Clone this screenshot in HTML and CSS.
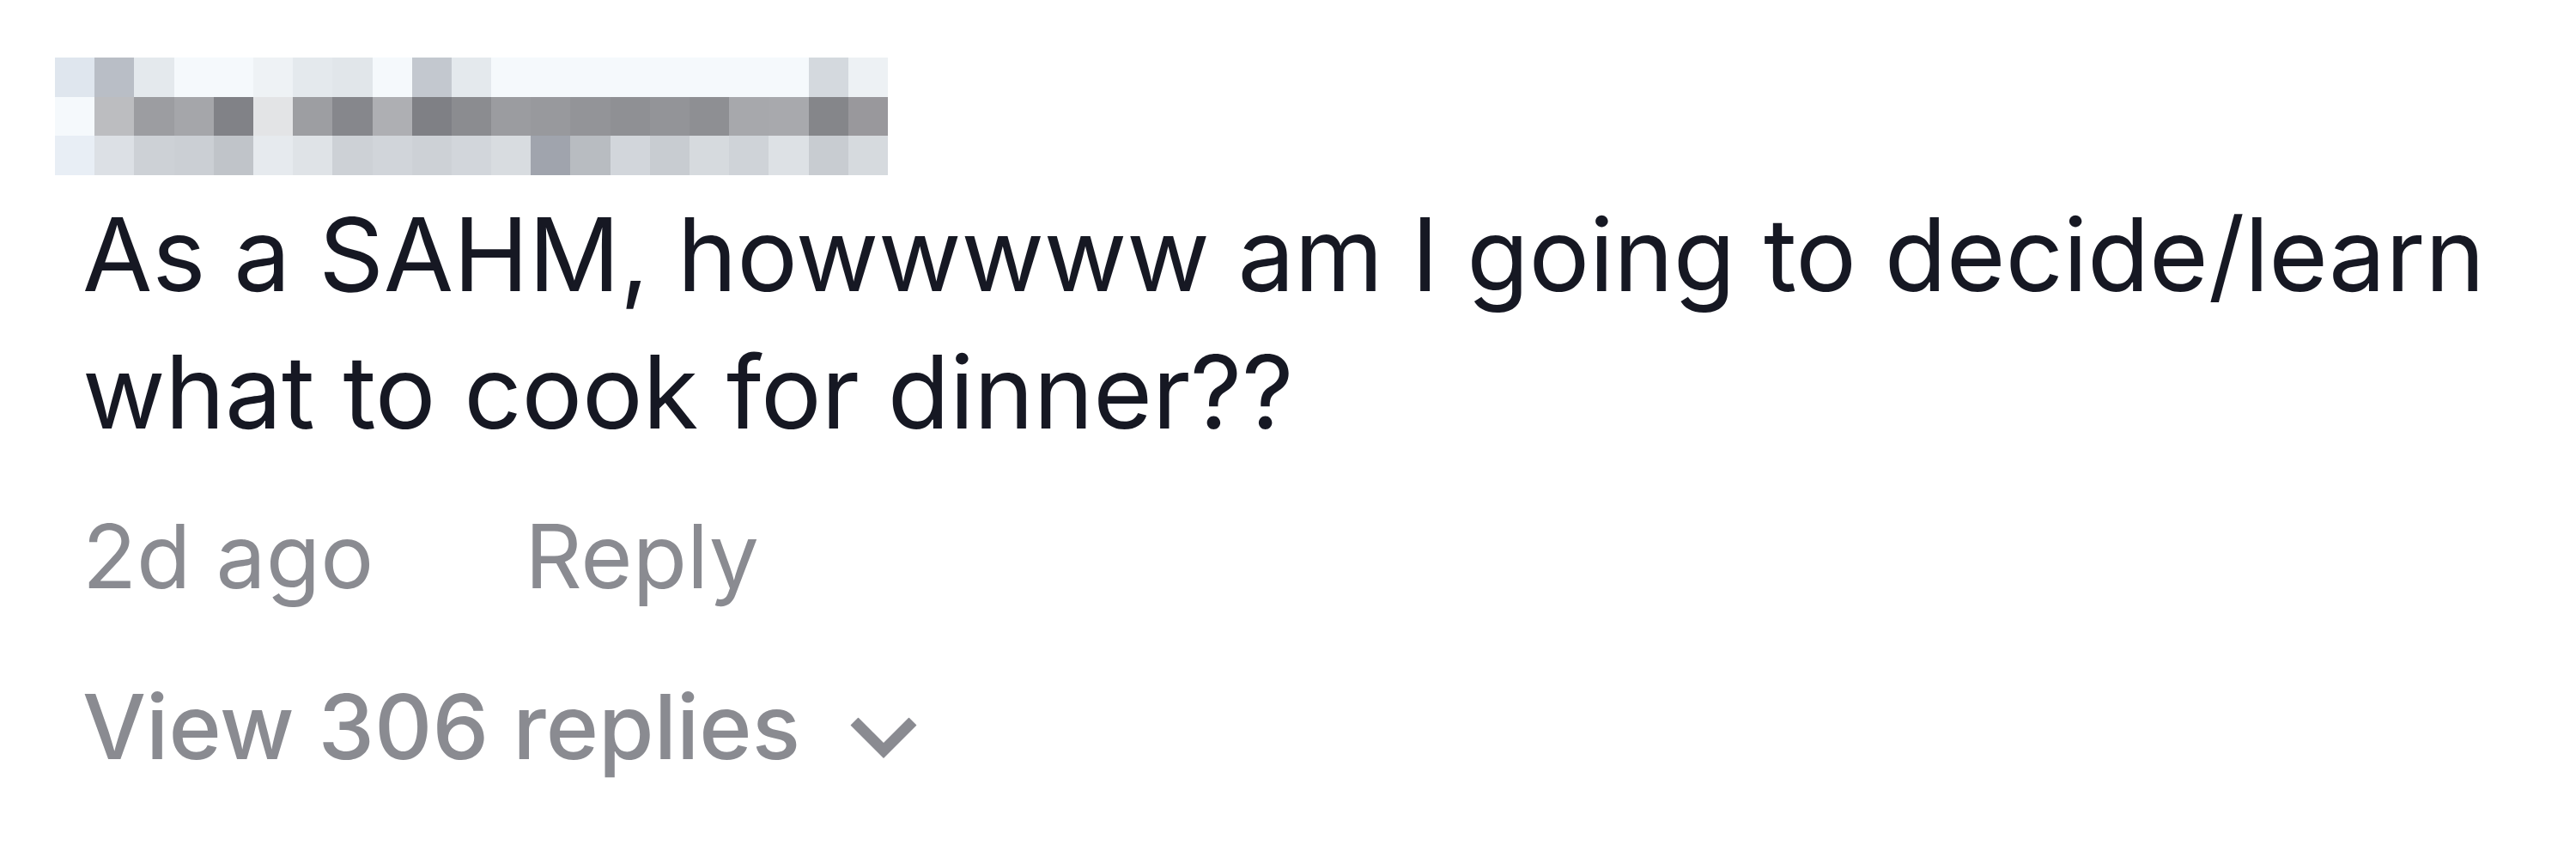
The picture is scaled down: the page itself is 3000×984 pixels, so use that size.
FILE: index.html
```html
<!DOCTYPE html>
<html lang="en">
<head>
<meta charset="utf-8">
<title>Comment</title>
<link rel="stylesheet" href="styles.css">
</head>
<body>
<div class="comment">
  <svg class="name-mosaic" viewBox="0 0 21 3" preserveAspectRatio="none" shape-rendering="crispEdges" aria-label="username (blurred)">
    <g>
      <rect x="0" y="0" width="1" height="1" fill="#dfe6ee"/><rect x="1" y="0" width="1" height="1" fill="#b9bec6"/><rect x="2" y="0" width="1" height="1" fill="#e4e9ed"/><rect x="3" y="0" width="1" height="1" fill="#f5f9fc"/><rect x="4" y="0" width="1" height="1" fill="#f5f9fc"/><rect x="5" y="0" width="1" height="1" fill="#eef2f5"/><rect x="6" y="0" width="1" height="1" fill="#e4e9ed"/><rect x="7" y="0" width="1" height="1" fill="#e1e6ea"/><rect x="8" y="0" width="1" height="1" fill="#f5f9fc"/><rect x="9" y="0" width="1" height="1" fill="#c3c8cf"/><rect x="10" y="0" width="1" height="1" fill="#e4e9ed"/><rect x="11" y="0" width="8" height="1" fill="#f5f9fc"/><rect x="19" y="0" width="1" height="1" fill="#d4d9de"/><rect x="20" y="0" width="1" height="1" fill="#edf1f4"/>
      <rect x="0" y="1" width="1" height="1" fill="#f5f9fc"/><rect x="1" y="1" width="1" height="1" fill="#bcbdc0"/><rect x="2" y="1" width="1" height="1" fill="#9c9da1"/><rect x="3" y="1" width="1" height="1" fill="#a5a6aa"/><rect x="4" y="1" width="1" height="1" fill="#818287"/><rect x="5" y="1" width="1" height="1" fill="#e3e4e6"/><rect x="6" y="1" width="1" height="1" fill="#9d9ea2"/><rect x="7" y="1" width="1" height="1" fill="#86878c"/><rect x="8" y="1" width="1" height="1" fill="#aeafb3"/><rect x="9" y="1" width="1" height="1" fill="#7f8085"/><rect x="10" y="1" width="1" height="1" fill="#8b8c90"/><rect x="11" y="1" width="1" height="1" fill="#9b9ca0"/><rect x="12" y="1" width="1" height="1" fill="#98999d"/><rect x="13" y="1" width="1" height="1" fill="#939498"/><rect x="14" y="1" width="1" height="1" fill="#8f9094"/><rect x="15" y="1" width="1" height="1" fill="#939498"/><rect x="16" y="1" width="1" height="1" fill="#8e8f93"/><rect x="17" y="1" width="1" height="1" fill="#a7a8ac"/><rect x="18" y="1" width="1" height="1" fill="#a8a9ad"/><rect x="19" y="1" width="1" height="1" fill="#85868a"/><rect x="20" y="1" width="1" height="1" fill="#99989c"/>
      <rect x="0" y="2" width="1" height="1" fill="#e8eef5"/><rect x="1" y="2" width="1" height="1" fill="#dce0e5"/><rect x="2" y="2" width="1" height="1" fill="#cdd1d6"/><rect x="3" y="2" width="1" height="1" fill="#cbcfd4"/><rect x="4" y="2" width="1" height="1" fill="#c0c4c9"/><rect x="5" y="2" width="1" height="1" fill="#e6eaee"/><rect x="6" y="2" width="1" height="1" fill="#dfe3e7"/><rect x="7" y="2" width="1" height="1" fill="#cdd1d6"/><rect x="8" y="2" width="1" height="1" fill="#d1d5da"/><rect x="9" y="2" width="1" height="1" fill="#cdd1d6"/><rect x="10" y="2" width="1" height="1" fill="#d2d6db"/><rect x="11" y="2" width="1" height="1" fill="#d8dce0"/><rect x="12" y="2" width="1" height="1" fill="#a0a4ad"/><rect x="13" y="2" width="1" height="1" fill="#b8bcc1"/><rect x="14" y="2" width="1" height="1" fill="#d2d6db"/><rect x="15" y="2" width="1" height="1" fill="#c8ccd1"/><rect x="16" y="2" width="1" height="1" fill="#d6dade"/><rect x="17" y="2" width="1" height="1" fill="#cfd3d8"/><rect x="18" y="2" width="1" height="1" fill="#dde1e5"/><rect x="19" y="2" width="1" height="1" fill="#c8ccd1"/><rect x="20" y="2" width="1" height="1" fill="#d6dade"/>
    </g>
  </svg>
  <div class="body">
    <p class="text">As a SAHM, howwwww am I going to decide/learn what to cook for dinner??</p>
    <div class="meta">
      <span class="time">2d ago</span>
      <span class="reply">Reply</span>
    </div>
    <div class="view-replies">
      <span>View 306 replies</span>
      <svg class="chevron" viewBox="0 0 78 48" aria-hidden="true">
        <polygon points="1.5,9.5 9.5,1.5 39,31 68.5,1.5 76.5,9.5 39,47" fill="#8a8b91" stroke="#8a8b91" stroke-width="1.5" stroke-linejoin="round"/>
      </svg>
    </div>
  </div>
</div>
</body>
</html>
```

FILE: styles.css
```css
html, body {
  margin: 0;
  padding: 0;
  background: #ffffff;
}

body {
  font-family: Inter, "Noto Sans", sans-serif;
}

.comment {
  padding: 67px 0 0 64px;
  display: flex;
  flex-direction: column;
}

.name-mosaic {
  display: block;
  width: 970px;
  height: 137px;
}

.body {
  padding-left: 32px;
  margin-top: 12px;
}

.text {
  margin: 0;
  width: 2860px;
  font-size: 118px;
  line-height: 160px;
  color: #161823;
  letter-spacing: -0.2px;
}

.meta {
  margin-top: 42px;
  display: flex;
  gap: 176px;
  font-size: 103.5px;
  line-height: 140px;
  color: #8a8b91;
}

.view-replies {
  margin-top: 58px;
  display: flex;
  align-items: center;
  gap: 58px;
  font-size: 104.5px;
  line-height: 140px;
  font-weight: 500;
  color: #8a8b91;
}

.chevron {
  width: 78px;
  height: 48px;
  margin-top: 26px;
}
```
